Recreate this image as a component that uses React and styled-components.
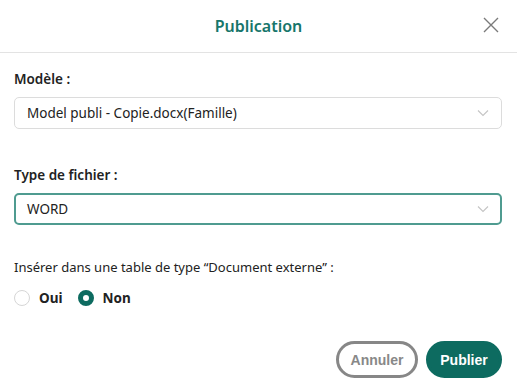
import React, { useState } from 'react';
import styled, { createGlobalStyle } from 'styled-components';

const GlobalStyle = createGlobalStyle`
  html, body {
    margin: 0;
    padding: 0;
    background: #fff;
  }
  body {
    font-family: "Noto Sans", "Open Sans", sans-serif;
    color: #222;
  }
  * { box-sizing: border-box; }
`;

const Dialog = styled.div`
  width: 517px;
  height: 392px;
  background: #fff;
  display: flex;
  flex-direction: column;
`;

const Header = styled.div`
  position: relative;
  height: 53px;
  display: flex;
  align-items: center;
  justify-content: center;
  border-bottom: 1px solid #e3e3e3;
`;

const Title = styled.h1`
  margin: 0;
  font-size: 16px;
  font-weight: 600;
  color: #17766b;
`;

const CloseButton = styled.button`
  position: absolute;
  right: 17px;
  top: 16px;
  width: 18px;
  height: 18px;
  padding: 0;
  border: none;
  background: none;
  cursor: pointer;
  display: flex;
  align-items: center;
  justify-content: center;
`;

const Body = styled.div`
  flex: 1;
  padding: 16px 15px 0 14px;
  display: flex;
  flex-direction: column;
`;

const Field = styled.div`
  display: flex;
  flex-direction: column;
  gap: 8px;
  margin-bottom: ${(p) => p.$gap}px;
`;

const Label = styled.label`
  font-size: 13.5px;
  font-weight: 600;
  color: #222;
  line-height: 20px;
`;

const SelectBox = styled.div`
  height: 32px;
  border-radius: 5px;
  border: ${(p) => (p.$focused ? '2px solid #4f9b90' : '1px solid #dcdcdc')};
  padding: 0 ${(p) => (p.$focused ? 11 : 12)}px;
  display: flex;
  align-items: center;
  justify-content: space-between;
  font-size: 13.5px;
  color: #222;
`;

const Question = styled.div`
  font-size: 13px;
  color: #222;
  line-height: 20px;
  margin-bottom: 12px;
`;

const RadioGroup = styled.div`
  display: flex;
  align-items: center;
  gap: 15px;
`;

const RadioOption = styled.label`
  display: flex;
  align-items: center;
  gap: 9px;
  font-size: 13.5px;
  font-weight: 700;
  color: #222;
  cursor: pointer;
`;

const RadioCircle = styled.span`
  width: 16px;
  height: 16px;
  border-radius: 50%;
  border: ${(p) => (p.$checked ? '5px solid #0d6b60' : '1px solid #d6d6d6')};
  background: #fff;
`;

const Footer = styled.div`
  display: flex;
  justify-content: flex-end;
  gap: 8px;
  padding: 0 15px 14px 0;
`;

const Button = styled.button`
  height: 37px;
  width: ${(p) => (p.$primary ? 76 : 82)}px;
  border-radius: 19px;
  padding: 0;
  font-family: "Liberation Sans", Arial, sans-serif;
  font-size: 14px;
  font-weight: 700;
  cursor: pointer;
  border: ${(p) => (p.$primary ? '3px solid #0d6b60' : '3px solid #878787')};
  background: ${(p) => (p.$primary ? '#0d6b60' : '#fff')};
  color: ${(p) => (p.$primary ? '#fff' : '#888')};
`;

const Chevron = () => (
  <svg width="12" height="8" viewBox="0 0 12 8" fill="none">
    <path d="M1 1.5l5 5 5-5" stroke="#c4c4c4" strokeWidth="1.1" />
  </svg>
);

export default function App() {
  const [insert, setInsert] = useState('non');
  return (
    <Dialog>
      <GlobalStyle />
      <Header>
        <Title>Publication</Title>
        <CloseButton aria-label="Fermer">
          <svg width="16" height="16" viewBox="0 0 16 16">
            <path d="M1 1l14 14M15 1L1 15" stroke="#7a7a7a" strokeWidth="1.4" />
          </svg>
        </CloseButton>
      </Header>
      <Body>
        <Field $gap={36}>
          <Label>Modèle :</Label>
          <SelectBox>
            <span>Model publi - Copie.docx(Famille)</span>
            <Chevron />
          </SelectBox>
        </Field>
        <Field $gap={32}>
          <Label>Type de fichier :</Label>
          <SelectBox $focused>
            <span>WORD</span>
            <Chevron />
          </SelectBox>
        </Field>
        <Question>Insérer dans une table de type “Document externe” :</Question>
        <RadioGroup>
          <RadioOption onClick={() => setInsert('oui')}>
            <RadioCircle $checked={insert === 'oui'} />
            Oui
          </RadioOption>
          <RadioOption onClick={() => setInsert('non')}>
            <RadioCircle $checked={insert === 'non'} />
            Non
          </RadioOption>
        </RadioGroup>
      </Body>
      <Footer>
        <Button>Annuler</Button>
        <Button $primary>Publier</Button>
      </Footer>
    </Dialog>
  );
}
